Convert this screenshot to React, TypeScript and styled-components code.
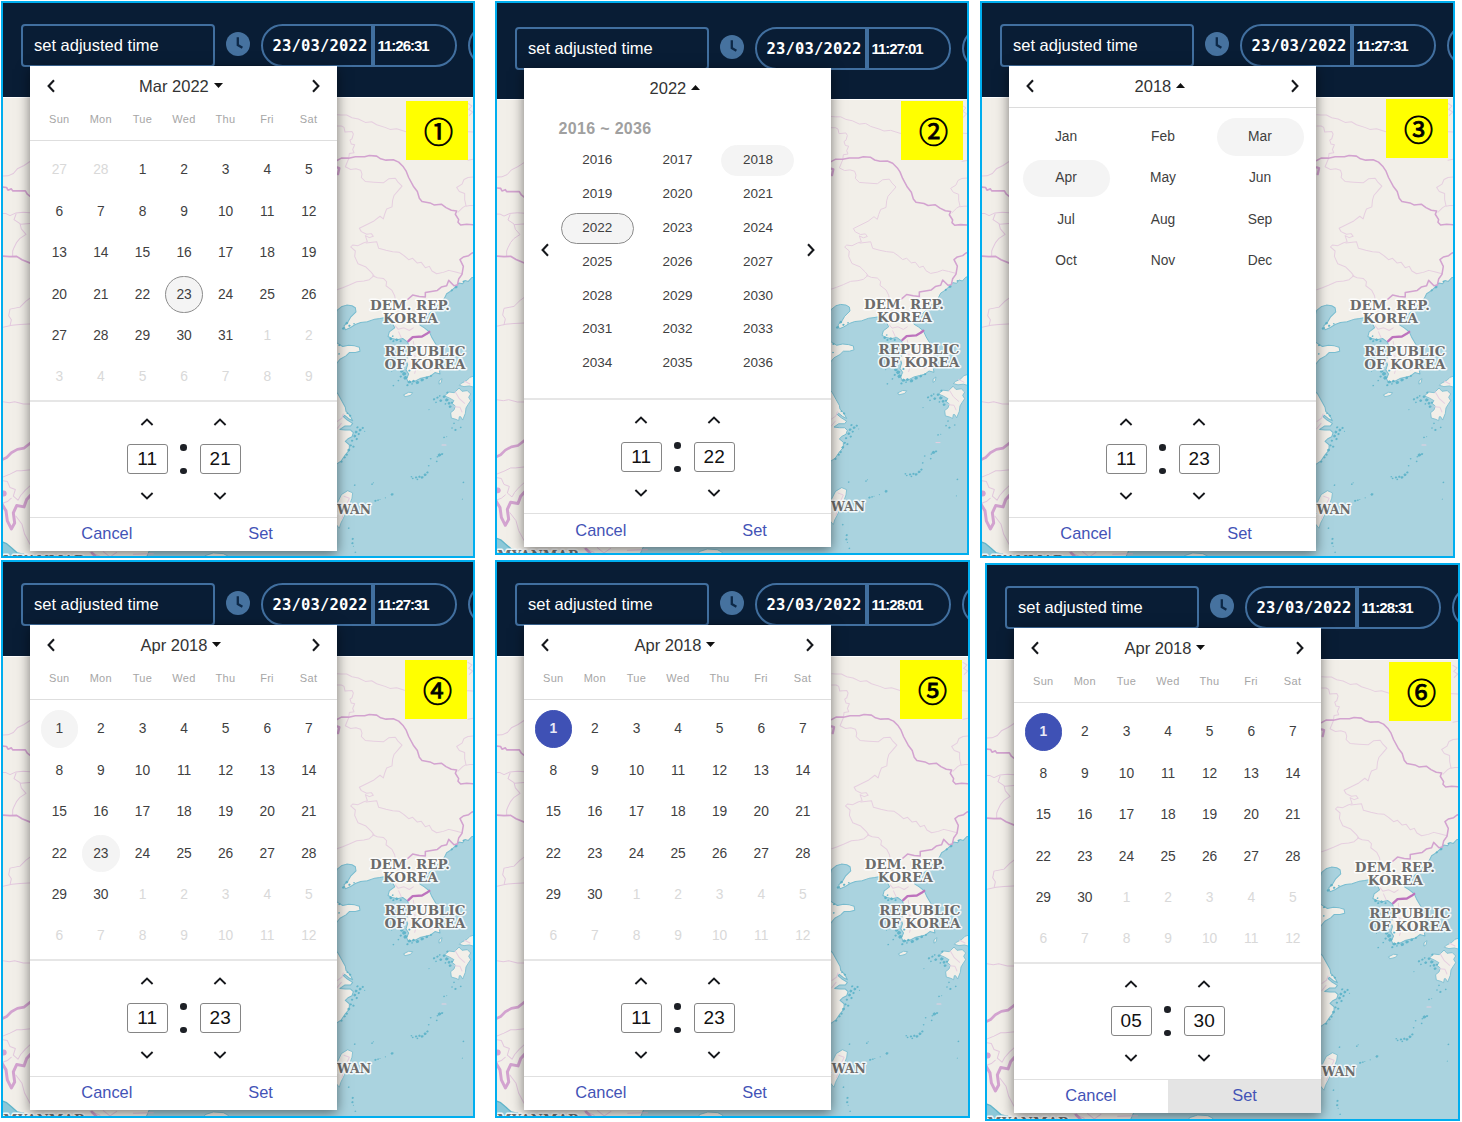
import React from "react";
import styled, { createGlobalStyle, css } from "styled-components";

const GlobalStyle = createGlobalStyle`
  *, *::before, *::after { box-sizing: border-box; }
  html, body { margin: 0; padding: 0; background: #ffffff; }
  body {
    width: 1462px;
    height: 1122px;
    overflow: hidden;
    font-family: "Liberation Sans", Arial, sans-serif;
  }
`;

/* ---------- page and step frames ---------- */

const Page = styled.main`
  display: flex;
  flex-direction: column;
  gap: 2px;
  width: 1462px;
  height: 1122px;
  padding: 1px 0 0 1px;
`;

const StepRow = styled.div`
  display: flex;
  align-items: flex-start;
`;

const Frame = styled.section<{ $w: number; $h: number; $left?: number; $top?: number }>`
  position: relative;
  display: flex;
  flex-direction: column;
  flex: none;
  width: ${(p) => p.$w}px;
  height: ${(p) => p.$h}px;
  margin-left: ${(p) => p.$left ?? 0}px;
  margin-top: ${(p) => p.$top ?? 0}px;
  border: 2px solid #00aeef;
  overflow: hidden;
  background: #f2efe9;
`;

/* ---------- top bar ---------- */

const TopBar = styled.header<{ $drop: number }>`
  display: flex;
  flex: none;
  align-items: flex-start;
  width: 620px;
  height: ${(p) => 94 + (p.$drop ? 2 : 0)}px;
  padding: ${(p) => 21 + p.$drop}px 0 0 18px;
  background: #091d35;
`;

const TimeField = styled.div`
  display: flex;
  flex: none;
  align-items: center;
  width: 193.5px;
  height: 43px;
  padding-left: 11px;
  border: 2px solid #416f9f;
  border-radius: 4px;
  color: #ffffff;
  font-size: 16.5px;
  white-space: nowrap;
`;

const ClockSlot = styled.div`
  flex: none;
  width: 24px;
  height: 24px;
  margin: 7.5px 11px 0 11px;
`;

const ClockPill = styled.div`
  display: flex;
  flex: none;
  width: 196px;
  height: 43px;
  margin-right: 11px;
  border: 2px solid #416f9f;
  border-radius: 22px;
  color: #ffffff;
`;

const DateReadout = styled.div`
  display: flex;
  align-items: center;
  width: 112px;
  padding: 2px 0 0 10px;
  border-right: 4px solid #416f9f;
  font: bold 15.5px/1 "DejaVu Sans Mono", monospace;
  letter-spacing: 0.17px;
`;

const TimeReadout = styled.div`
  display: flex;
  align-items: center;
  padding: 0 0 0 3px;
  font: bold 15px/1 "Liberation Sans", Arial, sans-serif;
  letter-spacing: -1px;
`;

/* ---------- numbered marker ---------- */

const Marker = styled.div<{ $x: number; $y: number }>`
  position: absolute;
  left: ${(p) => p.$x}px;
  top: ${(p) => p.$y}px;
  display: flex;
  align-items: center;
  justify-content: center;
  width: 62px;
  height: 59px;
  padding-left: 3px;
  background: #ffff00;
  color: #000000;
  font: 29px/1 "Noto Sans CJK JP", sans-serif;
  -webkit-text-stroke: 0.8px #000000;
`;

/* ---------- map ---------- */

const MapArea = styled.div`
  flex: 1;
  min-height: 0;
  border-top: 1px solid #ffffff;
  overflow: hidden;

  svg { display: block; }
`;

/* ---------- picker ---------- */

const Picker = styled.div<{ $compact?: boolean }>`
  position: absolute;
  left: 27px;
  top: ${(p) => (p.$compact ? 65 : 63)}px;
  display: flex;
  flex-direction: column;
  width: 307.4px;
  height: ${(p) => (p.$compact ? 479 : 484.5)}px;
  background: #ffffff;
  box-shadow: 0 3px 12px rgba(0, 0, 0, 0.5);
`;

const Calendar = styled.div<{ $compact?: boolean }>`
  flex: none;
  height: ${(p) => (p.$compact ? 332 : 336)}px;
  border-bottom: 2px solid #e6e6e6;
`;

const TitleBar = styled.div<{ $ruled?: boolean }>`
  display: flex;
  align-items: center;
  justify-content: space-between;
  height: ${(p) => (p.$ruled ? 42 : 40)}px;
  padding: 0 16px 0 15.5px;
  ${(p) => p.$ruled && css`
    padding-bottom: 1px;
    border-bottom: 1px solid #dcdcdc;
  `}
`;

const Title = styled.button`
  display: flex;
  align-items: center;
  gap: 5px;
  margin: 0 auto;
  padding: 0 5px 1px 0;
  border: 0;
  background: none;
  color: #333333;
  font: 16.5px/20px "Liberation Sans", Arial, sans-serif;
`;

const WeekHead = styled.div`
  display: grid;
  grid-template-columns: repeat(7, 41.55px);
  height: 35px;
  padding-left: 8.5px;
  padding-top: 6px;
  border-bottom: 1px solid #dedede;
  color: #a6a6a6;
  font-size: 11px;
  line-height: 14px;
  letter-spacing: 0.3px;
  text-align: center;
`;

const DayGrid = styled.div`
  display: grid;
  grid-template-columns: repeat(7, 41.58px);
  grid-auto-rows: 41.45px;
  padding: 8.5px 0 0 8.5px;
`;

type Mark = "none" | "soft" | "ring" | "solid";

const Day = styled.div<{ $mark: Mark; $out: boolean }>`
  display: flex;
  align-items: center;
  justify-content: center;
  justify-self: center;
  align-self: center;
  width: 37.5px;
  height: 37.5px;
  padding-bottom: 1px;
  border: 1px solid transparent;
  border-radius: 50%;
  color: ${(p) => (p.$out ? "#d9d9d9" : "#3f3f3f")};
  font-size: 13.8px;
  letter-spacing: -0.1px;
  ${(p) => p.$mark === "soft" && css`background: #f4f4f4; border-color: #f4f4f4;`}
  ${(p) => p.$mark === "ring" && css`background: #f4f4f4; border-color: #8c8c8c;`}
  ${(p) => p.$mark === "solid" && css`
    background: #3f51b5;
    border-color: #3f51b5;
    color: #e8eaf6;
    font-weight: bold;
  `}
`;

const MonthGrid = styled.div`
  display: grid;
  grid-template-columns: repeat(3, 97px);
  grid-auto-rows: 41.5px;
  padding: 8px 0 0 8.5px;
`;

const MonthCell = styled.div<{ $soft: boolean }>`
  display: flex;
  align-items: center;
  justify-content: center;
  place-self: center;
  width: 87px;
  height: 37.5px;
  padding-bottom: 1px;
  border-radius: 19px;
  background: ${(p) => (p.$soft ? "#f4f4f4" : "transparent")};
  color: #3f3f3f;
  font-size: 13.8px;
`;

const YearBody = styled.div`
  display: grid;
  grid-template-columns: 33px 241px 33px;
  align-items: center;
`;

const YearColumn = styled.div`
  padding-top: 11px;
`;

const YearRange = styled.div`
  height: 24.5px;
  padding-left: 1.5px;
  color: #a0a0a0;
  font-size: 16px;
  font-weight: bold;
  line-height: 19px;
  letter-spacing: 0.33px;
`;

const YearGrid = styled.div`
  display: grid;
  grid-template-columns: repeat(3, 80.4px);
  grid-auto-rows: 33.9px;
`;

const YearCell = styled.div<{ $mark: Mark }>`
  display: flex;
  justify-content: center;
  place-self: center;
  width: 73px;
  height: 31px;
  border: 1px solid
    ${(p) => (p.$mark === "ring" ? "#8c8c8c" : p.$mark === "soft" ? "#f4f4f4" : "transparent")};
  border-radius: 16px;
  background: ${(p) => (p.$mark === "none" ? "transparent" : "#f4f4f4")};
  color: #3f3f3f;
  font-size: 13.5px;
  line-height: 27px;
`;

const YearArrow = styled.div<{ $side: "left" | "right" }>`
  display: flex;
  justify-content: ${(p) => (p.$side === "left" ? "flex-start" : "flex-end")};
  padding: ${(p) => (p.$side === "left" ? "12px 0 0 15.5px" : "12px 15.5px 0 0")};
`;

const TimeRow = styled.div`
  display: flex;
  flex: 1;
  align-items: flex-start;
  justify-content: center;
`;

const Stepper = styled.div<{ $compact?: boolean }>`
  display: flex;
  flex-direction: column;
  align-items: center;
  gap: ${(p) => (p.$compact ? 17.5 : 18)}px;
  padding-top: 16px;
`;

const Digits = styled.div`
  display: flex;
  align-items: center;
  justify-content: center;
  width: 41px;
  height: 30px;
  border: 1px solid #858585;
  border-radius: 3px;
  color: #111111;
  font-size: 19px;
`;

const Colon = styled.div`
  display: flex;
  flex-direction: column;
  align-items: center;
  gap: 17px;
  width: 32px;
  padding-top: 42px;
`;

const Dot = styled.i`
  width: 6.6px;
  height: 6.6px;
  border-radius: 50%;
  background: #1d2026;
`;

const Actions = styled.div`
  display: flex;
  flex: none;
  height: 34px;
  border-top: 1px solid #e0e0e0;
`;

const ActionButton = styled.button<{ $pressed?: boolean }>`
  flex: 1;
  padding: 0 0 2px;
  border: 0;
  background: ${(p) => (p.$pressed ? "#e4e4e4" : "transparent")};
  color: #4353b6;
  font: 16.4px/20px "Liberation Sans", Arial, sans-serif;
`;

/* ---------- icons ---------- */

const Chevron = ({ dir }: { dir: "left" | "right" | "up" | "down" }) => {
  const side = dir === "left" || dir === "right";
  const d = {
    left: "M8 1.3 L2.6 7 L8 12.7",
    right: "M2 1.3 L7.4 7 L2 12.7",
    up: "M1.4 7 L7 1.6 L12.6 7",
    down: "M1.4 1 L7 6.4 L12.6 1",
  }[dir];
  return (
    <svg width={side ? 10 : 14} height={side ? 14 : 8} fill="none" stroke="#16181c" strokeWidth={side ? 2.1 : 1.9}>
      <path d={d} />
    </svg>
  );
};

const Caret = ({ up }: { up?: boolean }) => (
  <svg width="9" height="5" viewBox="0 0 9 5">
    <path d={up ? "M0 5 L4.5 0 L9 5 Z" : "M0 0 L9 0 L4.5 5 Z"} fill="#111" />
  </svg>
);

const ClockIcon = () => (
  <svg width="24" height="24" viewBox="0 0 24 24">
    <circle cx="12" cy="12" r="12" fill="#46729f" />
    <path d="M11.8 5.3 V13 L16.4 15.7" fill="none" stroke="#0d2948" strokeWidth="2.3" />
  </svg>
);

/* ---------- map drawing ---------- */

const SPECKS: [number, number, number][] = [
  [50, 698, 5], [58, 706, 4], [72, 700, 3], [40, 714, 5], [28, 764, 4], [27, 790, 3],
  [182, 745, 5], [190, 752, 4], [200, 748, 5], [212, 752, 4], [188, 737, 3], [222, 795, 3],
  [215, 842, 6], [222, 850, 7], [212, 858, 4], [226, 862, 7], [238, 874, 6], [250, 872, 5], [262, 876, 6],
  [276, 868, 6], [290, 862, 5], [303, 856, 4], [232, 884, 4], [205, 870, 3], [190, 885, 3], [185, 842, 2],
  [238, 840, 4], [246, 880, 3], [312, 926, 4], [322, 921, 4], [332, 930, 5], [342, 918, 5], [350, 928, 6],
  [357, 938, 5], [346, 940, 3], [360, 948, 5], [366, 936, 4], [318, 935, 3], [329, 916, 3], [352, 906, 4],
  [372, 998, 3], [376, 1018, 4], [366, 1012, 3], [392, 1010, 3], [342, 1040, 3], [350, 1038, 2],
  [328, 1093, 6], [336, 1090, 4], [322, 1098, 3], [302, 1104, 3], [320, 1112, 3], [296, 1125, 3],
  [292, 1145, 4], [285, 1152, 5], [276, 1160, 5], [268, 1158, 4], [258, 1160, 4], [244, 1158, 3],
  [262, 1166, 3], [248, 1163, 3], [82, 1010, 4], [90, 1018, 5], [98, 1012, 4], [78, 1024, 5],
  [86, 1030, 4], [74, 1036, 5], [80, 1045, 4], [66, 1050, 4], [62, 1064, 4], [70, 1068, 4], [56, 1078, 5],
  [50, 1092, 4], [44, 1100, 4], [34, 1113, 4], [104, 1022, 2], [74, 1183, 3], [126, 1180, 3], [130, 1176, 2],
  [136, 1230, 4], [144, 1228, 3], [150, 1226, 2], [186, 1211, 5], [166, 1221, 2], [56, 1312, 3],
  [68, 1344, 4], [67, 1357, 4], [70, 1366, 2], [76, 1384, 3], [400, 1175, 3], [397, 1225, 2],
  [297, 957, 2], [378, 590, 5], [365, 600, 4], [400, 573, 3], [60, 975, 4], [52, 968, 3],
];

const ChinaMap = ({ height }: { height: number }) => (
  <svg width="100%" height={height} viewBox="3 98 470 458" preserveAspectRatio="none">
    <rect x="3" y="97" width="470" height="459" fill="#f2efe9" />
    <g transform="translate(330 90) scale(0.33333)" strokeLinejoin="round" strokeLinecap="round">
      <path
        fill="#aad3df"
        stroke="#79bdd0"
        strokeWidth="3"
        d="M440 556 L425 562 415 573 405 570 398 580 386 578 376 590 362 602 350 610 343 624 330 640 312 655 300 668 285 680
          268 690 270 704 283 712 298 724 306 742 318 762 327 782 333 812 328 838 330 850 315 846 302 856 286 860 270 864
          255 872 235 876 230 864 236 850 228 838 233 822 228 808 236 794 230 780 238 768 232 754 218 744 202 748 186 744
          174 738 178 724 194 712 188 700 176 686 162 682 150 684 134 686 112 694 92 696 76 702 60 712 46 718 42 706
          54 694 62 680 78 664 76 652 66 646 50 644 36 648 21 660 8 700 10 750 22 758 38 768 56 764 74 766 88 770 90 782
          76 786 58 786 48 796 30 806 14 826 14 900 24 910 36 932 46 950 48 962 60 974 68 990 56 984 44 974 40 978 52 988
          68 998 62 1006 44 1006 30 1016 46 1018 62 1018 70 1026 66 1038 54 1044 46 1052 58 1062 58 1078 46 1092 34 1110
          14 1124 -100 1260 -520 1330 -560 1420 440 1420 Z"
      />
      <g fill="#f2efe9" stroke="#79bdd0" strokeWidth="2.5">
        <path d="M54 1200 L68 1206 66 1222 56 1250 42 1278 32 1298 28 1312 18 1300 8 1290 20 1240 34 1212 Z" />
        <path d="M388 893 L396 902 412 900 422 910 416 920 422 930 414 942 408 952 406 968 398 988 392 978 388 978 386 990 378 986 364 982 362 966 372 958 376 946 366 938 372 930 358 922 344 916 356 904 372 906 Z" />
        <path d="M440 854 L420 860 410 870 394 878 388 884 402 888 418 886 440 892 Z" />
        <path d="M222 912 L236 905 248 906 242 914 226 918 Z" />
        <path d="M328 870 L336 864 334 876 328 880 Z" />
        <path d="M-385 1420 L-375 1394 -350 1386 -320 1388 -305 1396 -325 1420 Z" />
      </g>
      <g fill="#62b5ca">
        {SPECKS.map(([x, y, r], i) => (
          <path key={i} d={`M${x - r * 0.9} ${y} l${r * 0.8} ${-r * 0.9} l${r * 1.1} ${r * 0.5} l${-r * 0.3} ${r * 0.9} l${-r} ${r * 0.3} Z`} />
        ))}
      </g>
      <g fill="none" stroke="#e6cfe0" strokeWidth="3">
        <path d="M21 74 L34 75 50 75 66 83 85 87 106 97 125 95 140 104 165 112 180 118 200 116 228 125 300 128 400 124 440 126" />
        <path d="M21 108 L34 108 42 112 45 126 66 124 70 132 66 146 60 150 64 162 74 164 68 178 72 188 58 190 56 206 46 230 62 238 78 236 92 240 96 252 94 262 106 274 132 276 160 278 176 266 196 264 204 276 216 288 204 302 192 316 188 330 186 350 170 356 164 372 160 386 150 378 132 392 108 404 88 414 94 424 110 432 124 430 130 438 118 442 106 436 112 454 100 458 84 466 68 464 62 470 76 482 74 498 84 520 108 530 124 546 132 556 118 568 102 572 80 574 58 584 38 592 21 598" />
        <path d="M108 458 L140 454 146 474 168 480 188 484 208 486 222 496 236 508 248 504 262 518 274 516 286 532 298 528 306 542 320 550 340 546 356 540 374 544 396 550" />
        <path d="M128 556 L142 562 160 564 170 574 168 586 186 600 194 616 196 628" />
        <path d="M440 260 L414 262 402 268 396 282 380 292 388 304 404 310 404 328 408 346 398 352 384 366 M408 348 L420 346 440 346" />
        <path d="M414 40 L426 48 416 58 428 66 418 76 M414 210 L440 206" />
        <path d="M196 706 L204 716 222 712 238 720 250 712 M206 724 L214 742 M250 752 L252 768 268 772 282 764 300 772 310 790 M252 770 L240 790 256 796 246 818 260 826 254 848 M260 826 L284 820 300 838 320 830" />
        <path d="M376 904 L388 924 404 938 M374 948 L390 950 396 964 M404 872 L420 880 M42 1216 L58 1222 50 1240 40 1262 36 1284 M40 1240 L52 1244 M22 992 L36 982 40 970 M21 1014 L34 998 M336 1063 L348 1063" />
      </g>
      <g fill="none" stroke="#d3a3d0" strokeWidth="4.6">
        <path d="M0 216 L21 211 34 204 56 204 76 200 104 200 118 196 140 198 152 206 168 210 190 209 206 216 220 230 228 242 236 262 250 288 262 304 268 324 276 334 300 338 312 344 334 342 348 352 364 360 380 362 376 372 386 388 384 396 392 404 410 402 440 404" />
        <path d="M21 232 L28 234 24 252" strokeWidth="7" />
        <path d="M440 486 L426 488 416 496 400 500 390 508 400 528 396 552 386 566 382 584 372 586 356 570 350 586 334 590 322 600 286 606 286 620 268 618 248 614 232 628" />
      </g>
      <path d="M235 752 L248 740 276 738 290 730 298 724" fill="none" stroke="#bd72bd" strokeWidth="7" />
    </g>

    <g transform="translate(0 90) scale(0.33333)" fill="none" strokeLinejoin="round" strokeLinecap="round">
      <path d="M0 1350 L20 1358 36 1372 52 1386 72 1390 90 1410 0 1420 Z" fill="#8dc8d8" stroke="#62b5ca" strokeWidth="4" />
      <g stroke="#e3c8de" strokeWidth="3">
        <path d="M0 258 L24 257 40 250 52 236 72 226 90 214" />
        <path d="M0 370 L18 370 30 376 48 368 70 366 100 368 M48 372 L42 388 60 400 64 416 78 432 60 444 50 456 42 472 38 482 38 497 M62 402 L90 400" />
        <path d="M100 616 L78 632 60 650 30 656 26 676 34 688 30 706 M0 712 L36 704 60 702 100 700" />
        <path d="M0 932 L28 936 44 933 70 940 100 940" />
        <path d="M0 1162 L30 1150 50 1140 64 1140 100 1136 M100 1176 L76 1198 62 1214 54 1228 40 1216 46 1196 30 1190 22 1172 0 1168 M0 1240 L22 1232 34 1222 M48 1276 L66 1300 74 1330 90 1360" />
        <path d="M270 1384 L300 1396 M310 1382 L330 1398 350 1384 M400 1390 L460 1388" />
      </g>
      <g stroke="#d3a3d0" strokeWidth="5">
        <path d="M0 290 L20 292 24 300 34 296 38 302 76 302 82 312 100 326" />
        <path d="M0 497 L30 499 50 498 66 508 100 522" />
        <path d="M0 1110 L20 1100 34 1086 52 1076 72 1072 100 1050" strokeWidth="8" />
        <path d="M0 1230 L18 1260 22 1290 34 1314 44 1296 40 1266 50 1244 72 1248 80 1226 100 1204" strokeWidth="9" />
        <path d="M276 1386 L290 1400" strokeWidth="8" />
      </g>
      <circle cx="11" cy="1208" r="9" fill="#d3a3d0" />
    </g>

    <g
      fill="#6c6c6c"
      stroke="#ffffff"
      strokeOpacity="0.85"
      strokeWidth="3"
      strokeLinejoin="round"
      paintOrder="stroke"
      fontFamily='"DejaVu Serif", serif'
      fontWeight="bold"
      fontSize="13"
    >
      <text x="370" y="309.2" textLength="80" lengthAdjust="spacingAndGlyphs">DEM. REP.</text>
      <text x="383" y="322.4" textLength="55" lengthAdjust="spacingAndGlyphs">KOREA</text>
      <text x="384.5" y="355.2" textLength="81" lengthAdjust="spacingAndGlyphs">REPUBLIC</text>
      <text x="384.5" y="368.4" textLength="81" lengthAdjust="spacingAndGlyphs">OF KOREA</text>
      <text x="313" y="513.4" textLength="58" lengthAdjust="spacingAndGlyphs">TAIWAN</text>
      <text x="3" y="563.5" textLength="82" lengthAdjust="spacingAndGlyphs">MYANMAR</text>
    </g>
  </svg>
);

/* ---------- picker views ---------- */

const WEEKDAYS = ["Sun", "Mon", "Tue", "Wed", "Thu", "Fri", "Sat"];
const MONTHS = ["Jan", "Feb", "Mar", "Apr", "May", "Jun", "Jul", "Aug", "Sep", "Oct", "Nov", "Dec"];

/* Six weeks of days: `lead` days from the previous month, the month itself, then the next. */
const buildDays = (lead: number, prevLength: number, length: number) =>
  Array.from({ length: 42 }, (_, i) => {
    const n = i - lead + 1;
    if (n < 1) return { n: prevLength + n, out: true };
    if (n > length) return { n: n - length, out: true };
    return { n, out: false };
  });

type DaysView = {
  kind: "days";
  title: string;
  lead: number;
  prevLength: number;
  length: number;
  marks: Record<number, Mark>;
};
type View = DaysView | { kind: "months" } | { kind: "years" };

const DaysPanel = ({ view }: { view: DaysView }) => (
  <>
    <TitleBar>
      <Chevron dir="left" />
      <Title>{view.title}<Caret /></Title>
      <Chevron dir="right" />
    </TitleBar>
    <WeekHead>{WEEKDAYS.map((d) => <span key={d}>{d}</span>)}</WeekHead>
    <DayGrid>
      {buildDays(view.lead, view.prevLength, view.length).map(({ n, out }, i) => (
        <Day key={i} $out={out} $mark={out ? "none" : view.marks[n] ?? "none"}>{n}</Day>
      ))}
    </DayGrid>
  </>
);

const MonthsPanel = () => (
  <>
    <TitleBar $ruled>
      <Chevron dir="left" />
      <Title>2018<Caret up /></Title>
      <Chevron dir="right" />
    </TitleBar>
    <MonthGrid>
      {MONTHS.map((m) => (
        <MonthCell key={m} $soft={m === "Mar" || m === "Apr"}>{m}</MonthCell>
      ))}
    </MonthGrid>
  </>
);

const YearsPanel = () => (
  <>
    <TitleBar>
      <Title>2022<Caret up /></Title>
    </TitleBar>
    <YearBody>
      <YearArrow $side="left"><Chevron dir="left" /></YearArrow>
      <YearColumn>
        <YearRange>2016 ~ 2036</YearRange>
        <YearGrid>
          {Array.from({ length: 21 }, (_, i) => 2016 + i).map((y) => (
            <YearCell key={y} $mark={y === 2022 ? "ring" : y === 2018 ? "soft" : "none"}>{y}</YearCell>
          ))}
        </YearGrid>
      </YearColumn>
      <YearArrow $side="right"><Chevron dir="right" /></YearArrow>
    </YearBody>
  </>
);

const TimeStepper = ({ value, compact }: { value: string; compact: boolean }) => (
  <Stepper $compact={compact}>
    <Chevron dir="up" />
    <Digits>{value}</Digits>
    <Chevron dir="down" />
  </Stepper>
);

/* ---------- one numbered step ---------- */

type Step = {
  marker: string;
  markerAt: [number, number];
  frame: { w: number; h: number; left?: number; top?: number };
  clock: string;
  time: [string, string];
  view: View;
  pressed?: boolean;
};

const april = (marks: Record<number, Mark>): DaysView => ({
  kind: "days", title: "Apr 2018", lead: 0, prevLength: 31, length: 30, marks,
});

const STEPS: Step[] = [
  {
    marker: "①", markerAt: [403, 98], frame: { w: 474, h: 557 }, clock: "11:26:31", time: ["11", "21"],
    view: { kind: "days", title: "Mar 2022", lead: 2, prevLength: 28, length: 31, marks: { 23: "ring" } },
  },
  {
    marker: "②", markerAt: [404, 98], frame: { w: 474, h: 554, left: 20 }, clock: "11:27:01", time: ["11", "22"],
    view: { kind: "years" },
  },
  {
    marker: "③", markerAt: [404, 96], frame: { w: 475, h: 557, left: 11 }, clock: "11:27:31", time: ["11", "23"],
    view: { kind: "months" },
  },
  {
    marker: "④", markerAt: [402, 98], frame: { w: 474, h: 558 }, clock: "11:27:31", time: ["11", "23"],
    view: april({ 1: "soft", 23: "soft" }),
  },
  {
    marker: "⑤", markerAt: [403, 98], frame: { w: 475, h: 558, left: 20 }, clock: "11:28:01", time: ["11", "23"],
    view: april({ 1: "solid" }),
  },
  {
    marker: "⑥", markerAt: [402, 97], frame: { w: 475, h: 558, left: 15, top: 3 }, clock: "11:28:31", time: ["05", "30"],
    view: april({ 1: "solid" }), pressed: true,
  },
];

const StepFrame = ({ step }: { step: Step }) => {
  const { frame, view, time } = step;
  const compact = view.kind === "years";
  return (
    <Frame $w={frame.w} $h={frame.h} $left={frame.left} $top={frame.top}>
      <TopBar $drop={compact ? 3 : 0}>
        <TimeField>set adjusted time</TimeField>
        <ClockSlot><ClockIcon /></ClockSlot>
        <ClockPill>
          <DateReadout>23/03/2022</DateReadout>
          <TimeReadout>{step.clock}</TimeReadout>
        </ClockPill>
        <ClockPill />
      </TopBar>
      <MapArea><ChinaMap height={compact ? 453 : 459} /></MapArea>
      <Marker $x={step.markerAt[0]} $y={step.markerAt[1]}>{step.marker}</Marker>
      <Picker $compact={compact}>
        <Calendar $compact={compact}>
          {view.kind === "days" && <DaysPanel view={view} />}
          {view.kind === "months" && <MonthsPanel />}
          {view.kind === "years" && <YearsPanel />}
        </Calendar>
        <TimeRow>
          <TimeStepper value={time[0]} compact={compact} />
          <Colon><Dot /><Dot /></Colon>
          <TimeStepper value={time[1]} compact={compact} />
        </TimeRow>
        <Actions>
          <ActionButton>Cancel</ActionButton>
          <ActionButton $pressed={step.pressed}>Set</ActionButton>
        </Actions>
      </Picker>
    </Frame>
  );
};

export default function App() {
  return (
    <>
      <GlobalStyle />
      <Page>
        <StepRow>{STEPS.slice(0, 3).map((s) => <StepFrame key={s.marker} step={s} />)}</StepRow>
        <StepRow>{STEPS.slice(3).map((s) => <StepFrame key={s.marker} step={s} />)}</StepRow>
      </Page>
    </>
  );
}
